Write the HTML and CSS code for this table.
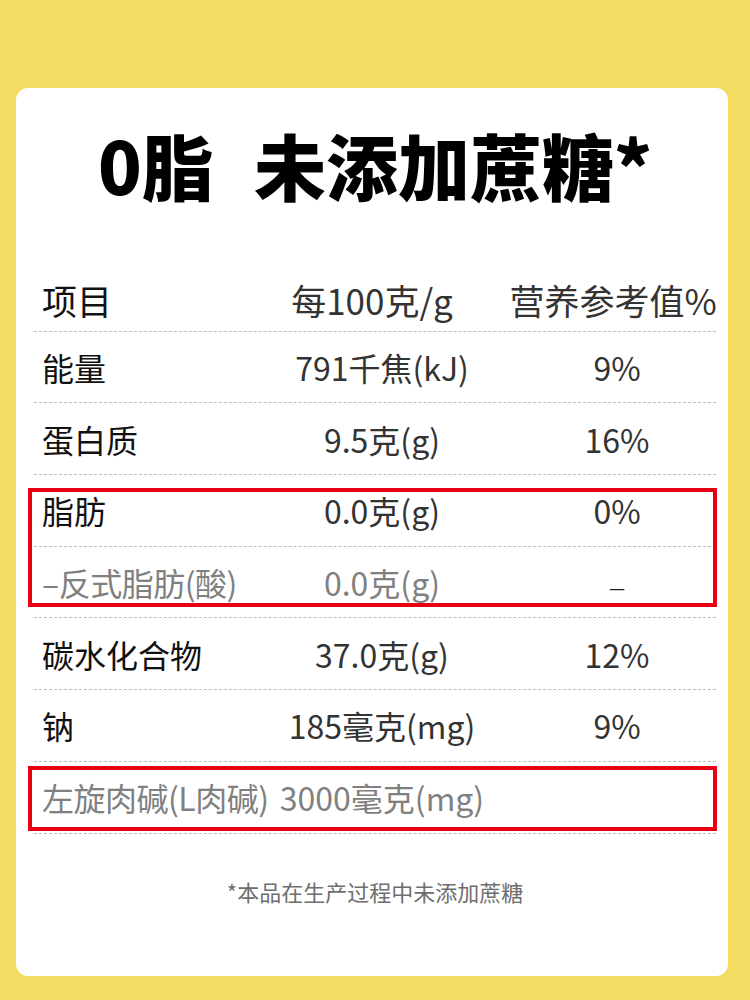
FILE: index.html
```html
<!DOCTYPE html>
<html lang="zh-CN">
<head>
<meta charset="utf-8">
<title>营养成分表</title>
<link rel="stylesheet" href="styles.css">
</head>
<body>
<main class="card">
  <h1 class="title"><span class="title-a">0脂</span><span class="title-b">未添加蔗糖*</span></h1>
  <div class="table">
    <div class="row head">
      <span class="c1">项目</span><span class="c2">每100克/g</span><span class="c3">营养参考值%</span>
    </div>
    <div class="row">
      <span class="c1">能量</span><span class="c2">791千焦(kJ)</span><span class="c3">9%</span>
    </div>
    <div class="row">
      <span class="c1">蛋白质</span><span class="c2">9.5克(g)</span><span class="c3">16%</span>
    </div>
    <div class="group box-fat">
      <div class="row">
        <span class="c1">脂肪</span><span class="c2">0.0克(g)</span><span class="c3">0%</span>
      </div>
      <div class="row muted">
        <span class="c1">–反式脂肪(酸)</span><span class="c2">0.0克(g)</span><span class="c3 dash">—</span>
      </div>
    </div>
    <div class="row">
      <span class="c1">碳水化合物</span><span class="c2">37.0克(g)</span><span class="c3">12%</span>
    </div>
    <div class="row">
      <span class="c1">钠</span><span class="c2">185毫克(mg)</span><span class="c3">9%</span>
    </div>
    <div class="group box-carn">
      <div class="row muted">
        <span class="c1">左旋肉碱(L肉碱)</span><span class="c2">3000毫克(mg)</span><span class="c3"></span>
      </div>
    </div>
  </div>
  <p class="note">*本品在生产过程中未添加蔗糖</p>
</main>
</body>
</html>
```

FILE: styles.css
```css
html, body {
  margin: 0;
  padding: 0;
}

body {
  background: #f4dc63;
  font-family: "Noto Sans CJK SC", "Noto Sans", sans-serif;
  width: 750px;
  height: 1000px;
  overflow: hidden;
}

.card {
  box-sizing: border-box;
  width: 712px;
  height: 888px;
  margin: 88px 0 0 16px;
  padding: 36px 12px 0 18px;
  background: #ffffff;
  border-radius: 12px;
}

.title {
  margin: 0 0 56px;
  height: 80px;
  line-height: 80px;
  font-size: 72px;
  font-weight: 900;
  color: #000;
  text-align: center;
  letter-spacing: 0;
  display: flex;
  justify-content: center;
  gap: 40px;
}

.table {
  display: flex;
  flex-direction: column;
}

.row {
  box-sizing: border-box;
  height: 71.7px;
  display: grid;
  grid-template-columns: 212px 272px 198px;
  align-items: center;
  border-bottom: 1px dashed #bdbdbd;
  font-size: 32px;
  line-height: 40px;
  color: #333;
  white-space: nowrap;
}

.head {
  font-size: 35px;
  padding-top: 10px;
}

.c1 {
  padding-left: 8px;
  color: #111;
  font-weight: 400;
}

.c2, .c3 {
  text-align: center;
  justify-self: center;
}

.head .c2 {
  margin-right: 20px;
}

.head .c3 {
  margin-right: 8px;
}

.muted .c1,
.muted .c2 {
  color: #808080;
}

.muted .c1 {
  letter-spacing: -0.5px;
}

.dash {
  color: #222;
  font-size: 18px;
  padding-top: 10px;
}

.group {
  position: relative;
}

.group::after {
  content: "";
  position: absolute;
  border: 4px solid #e60012;
  pointer-events: none;
}

.box-fat::after {
  top: 13px;
  bottom: 11px;
  left: -6px;
  right: -1px;
}

.box-carn::after {
  top: 4px;
  bottom: 3px;
  left: -6px;
  right: -1px;
}

.note {
  margin: 42px 0 0;
  line-height: 30px;
  font-size: 22px;
  color: #6e6e6e;
  text-align: center;
}
```
